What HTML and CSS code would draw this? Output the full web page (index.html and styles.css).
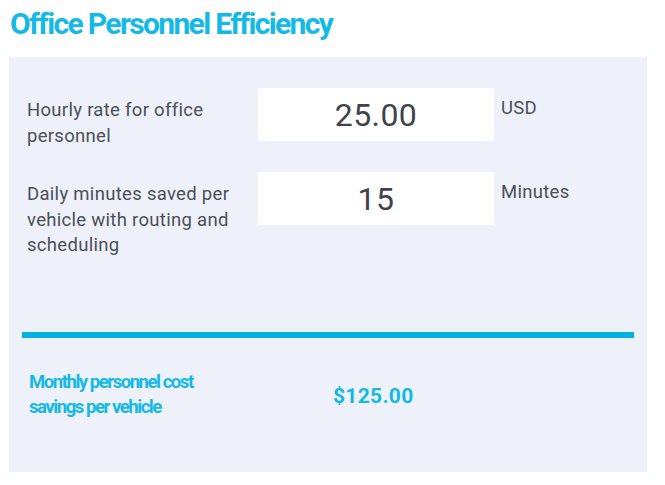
FILE: index.html
```html
<!DOCTYPE html>
<html>
<head>
<meta charset="utf-8">
<link rel="stylesheet" href="styles.css">
</head>
<body>
<h1 class="title">Office Personnel Efficiency</h1>
<section class="panel">
  <div class="fields">
    <div class="field">
      <div class="label">Hourly rate for office personnel</div>
      <div class="input">25.00</div>
      <div class="unit">USD</div>
    </div>
    <div class="field">
      <div class="label">Daily minutes saved per vehicle with routing and scheduling</div>
      <div class="input">15</div>
      <div class="unit">Minutes</div>
    </div>
  </div>
  <div class="divider"></div>
  <div class="result">
    <div class="result-label">Monthly personnel cost savings per vehicle</div>
    <div class="result-value">$125.00</div>
  </div>
</section>
</body>
</html>
```
FILE: styles.css
```css
html, body {
  margin: 0;
  padding: 0;
  background: #ffffff;
}
body {
  font-family: Roboto, "Liberation Sans", sans-serif;
  width: 665px;
  height: 485px;
  overflow: hidden;
}
.title {
  margin: 0;
  padding: 6px 0 0 10px;
  height: 57px;
  box-sizing: border-box;
  font-size: 30px;
  line-height: 36px;
  font-weight: 700;
  letter-spacing: -1.65px;
  color: #14b9e6;
}
.panel {
  margin-left: 9px;
  width: 638px;
  height: 415px;
  box-sizing: border-box;
  background: #eef1f9;
  padding: 31px 13px 0;
}
.fields {
  display: flex;
  flex-direction: column;
  gap: 23px;
  padding: 0 5px;
  height: 244px;
}
.field {
  display: grid;
  grid-template-columns: 224px 236px auto;
  column-gap: 7px;
  align-items: start;
}
.label {
  padding-top: 10px;
  font-size: 18.5px;
  line-height: 25.5px;
  letter-spacing: 0.3px;
  color: #4b5058;
}
.input {
  background: #ffffff;
  height: 53px;
  display: flex;
  align-items: center;
  justify-content: center;
  font-size: 32px;
  letter-spacing: 0.4px;
  color: #3f444c;
}
.unit {
  padding-top: 8px;
  font-size: 18.5px;
  line-height: 25.5px;
  letter-spacing: 0.3px;
  color: #4b5058;
}
.divider {
  height: 6px;
  background: #00b2e0;
}
.result {
  display: grid;
  grid-template-columns: 304px auto;
  align-items: center;
  padding: 32px 0 0 7px;
}
.result-label {
  width: 200px;
  font-size: 18.5px;
  line-height: 25px;
  font-weight: 700;
  letter-spacing: -1.45px;
  color: #14b9e6;
}
.result-value {
  font-size: 21px;
  font-weight: 700;
  letter-spacing: 0.3px;
  color: #14b9e6;
  padding-top: 2px;
}
```
